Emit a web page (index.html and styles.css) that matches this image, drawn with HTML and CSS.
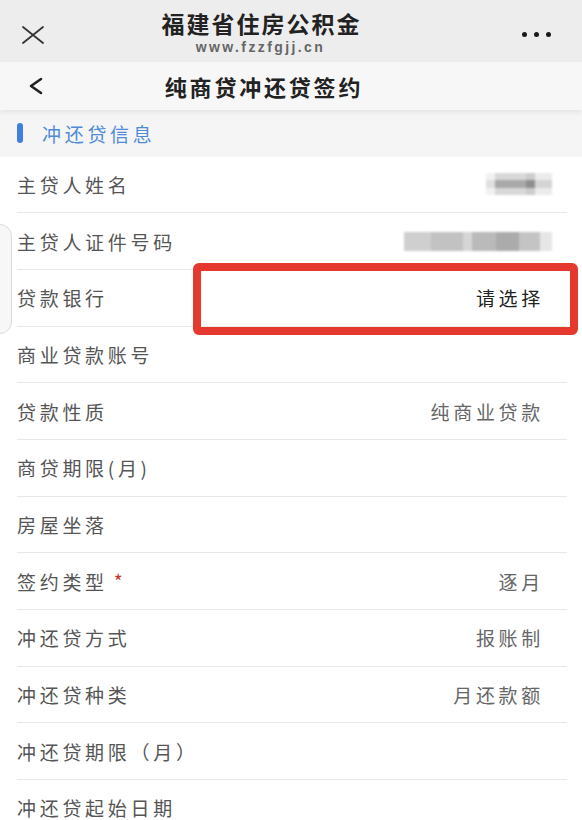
FILE: index.html
```html
<!DOCTYPE html>
<html lang="zh">
<head>
<meta charset="utf-8">
<link rel="stylesheet" href="styles.css">
</head>
<body>
<div class="page">
  <header class="topbar">
    <span class="close-icon">
      <svg width="24" height="18" viewBox="0 0 24 18"><path d="M2 1 L22 17 M22 1 L2 17" stroke="#333" stroke-width="1.8" fill="none" stroke-linecap="round"/></svg>
    </span>
    <div class="top-title">
      <div class="site-name">福建省住房公积金</div>
      <div class="site-url">www.fzzfgjj.cn</div>
    </div>
    <span class="more-icon"><i></i><i></i><i></i></span>
  </header>
  <nav class="navbar">
    <span class="back-icon">
      <svg width="16" height="18" viewBox="0 0 16 18"><path d="M13 2 L3 9 L13 16" stroke="#222" stroke-width="2.6" fill="none" stroke-linecap="round" stroke-linejoin="round"/></svg>
    </span>
    <div class="nav-title">纯商贷冲还贷签约</div>
  </nav>
  <div class="section-head">
    <span class="section-bar"></span>
    <span class="section-title">冲还贷信息</span>
  </div>
  <div class="form">
    <div class="row"><span class="label">主贷人姓名</span><span class="mosaic mosaic-short"></span></div>
    <div class="row"><span class="label">主贷人证件号码</span><span class="mosaic mosaic-long"></span></div>
    <div class="row"><span class="label">贷款银行</span><span class="value strong">请选择</span></div>
    <div class="row"><span class="label">商业贷款账号</span><span class="value"></span></div>
    <div class="row"><span class="label">贷款性质</span><span class="value">纯商业贷款</span></div>
    <div class="row"><span class="label">商贷期限(月)</span><span class="value"></span></div>
    <div class="row"><span class="label">房屋坐落</span><span class="value"></span></div>
    <div class="row"><span class="label">签约类型<em class="req">*</em></span><span class="value">逐月</span></div>
    <div class="row"><span class="label">冲还贷方式</span><span class="value">报账制</span></div>
    <div class="row"><span class="label">冲还贷种类</span><span class="value">月还款额</span></div>
    <div class="row"><span class="label">冲还贷期限（月）</span><span class="value"></span></div>
    <div class="row"><span class="label">冲还贷起始日期</span><span class="value"></span></div>
    <div class="highlight"></div>
  </div>
  <div class="side-handle"></div>
</div>
</body>
</html>
```
FILE: styles.css
```css
* { box-sizing: border-box; }
html, body { margin: 0; padding: 0; }
body {
  width: 582px;
  height: 820px;
  overflow: hidden;
  background: #fff;
  font-family: "Noto Sans CJK SC", "Noto Sans", sans-serif;
}
.page { position: relative; width: 582px; height: 820px; overflow: hidden; }

.topbar {
  height: 62px;
  background: #ededed;
  display: flex;
  align-items: center;
  padding: 0 20px 0 21px;
  position: relative;
}
.close-icon { display: flex; margin-top: 8px; }
.top-title {
  flex: 1;
  display: flex;
  flex-direction: column;
  align-items: center;
  padding-right: 46px;
  padding-top: 6px;
}
.site-name {
  font-size: 23px;
  font-weight: 700;
  color: #222;
  letter-spacing: 2px;
  line-height: 26px;
  margin-left: 2px;
}
.site-url {
  font-family: "Liberation Sans", Arial, sans-serif;
  font-size: 14px;
  font-weight: 700;
  color: #666;
  letter-spacing: 2.4px;
  line-height: 22px;
}
.more-icon { display: flex; gap: 7px; margin-top: 6px; margin-right: 11px; }
.more-icon i { display: block; width: 5px; height: 5px; border-radius: 50%; background: #1a1a1a; }

.navbar {
  height: 48px;
  background: #f7f7f7;
  display: flex;
  align-items: center;
  padding-left: 28px;
  box-shadow: 0 3px 4px rgba(0,0,0,0.06);
  position: relative;
  z-index: 2;
}
.back-icon { display: flex; margin-top: 0; }
.nav-title {
  flex: 1;
  text-align: center;
  font-size: 22px;
  font-weight: 700;
  color: #222;
  letter-spacing: 2.8px;
  padding-right: 98px;
}

.section-head {
  height: 46.5px;
  background: #f5f5f5;
  display: flex;
  align-items: center;
  padding-left: 17px;
}
.section-bar {
  width: 6px;
  height: 20px;
  border-radius: 3px;
  background: #3f7fe0;
}
.section-title {
  margin-left: 19px;
  font-size: 19px;
  color: #4f8ad8;
  letter-spacing: 3.7px;
}

.form { position: relative; }
.row {
  height: 56.7px;
  margin: 0 15px 0 17px;
  border-bottom: 1px solid #e8e8e8;
  display: flex;
  align-items: center;
  justify-content: space-between;
  padding-right: 23px;
}
.label {
  font-size: 19px;
  color: #555;
  letter-spacing: 3.7px;
  display: flex;
  align-items: center;
}
.req {
  font-style: normal;
  color: #c23a32;
  font-size: 19px;
  margin-left: 6px;
  margin-top: -2px;
}
.value {
  font-size: 19px;
  color: #666;
  letter-spacing: 3.7px;
}
.value.strong { color: #222; }

.mosaic {
  display: block;
  margin-right: -8px;
  filter: blur(1.2px);
}
.mosaic-short {
  width: 66px;
  height: 22px;
  background:
    linear-gradient(180deg, rgba(255,255,255,0.55) 0 30%, rgba(255,255,255,0) 30% 70%, rgba(255,255,255,0.55) 70% 100%),
    linear-gradient(90deg, #e0e0e0 0 14%, #a9a9a9 14% 60%, #8f8f8f 60% 75%, #d4d4d4 75% 100%);
}
.mosaic-long {
  width: 148px;
  height: 19px;
  background:
    linear-gradient(90deg, #cfcfcf 0 18%, #c2c2c2 18% 40%, #d6d6d6 40% 46%, #bababa 46% 62%, #ababab 62% 78%, #c4c4c4 78% 92%, #e6e6e6 92% 100%);
}

.highlight {
  position: absolute;
  left: 193px;
  top: 106px;
  width: 385px;
  height: 72px;
  border: 8px solid #e5392f;
  border-radius: 6px;
}

.side-handle {
  position: absolute;
  left: -12px;
  top: 224px;
  width: 24px;
  height: 110px;
  background: #f7f7f7;
  border: 1px solid #dcdcdc;
  border-radius: 12px;
}
```
